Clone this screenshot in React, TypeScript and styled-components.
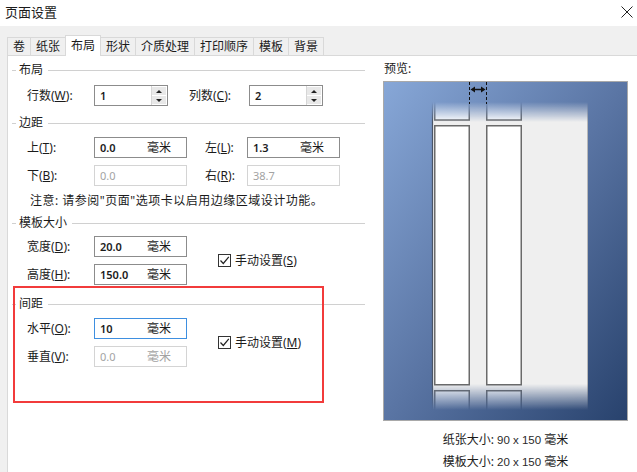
import React from 'react';
import styled, { createGlobalStyle } from 'styled-components';

const GlobalStyle = createGlobalStyle`
  html, body { margin: 0; padding: 0; background: #ffffff; }
  body {
    width: 637px; height: 472px; overflow: hidden;
    font-family: "Noto Sans", "Noto Sans CJK SC", sans-serif;
    font-size: 12px; line-height: 16px; color: #1b1b1b;
  }
  * { box-sizing: border-box; }
`;

const Window = styled.div`
  position: relative;
  width: 637px;
  height: 472px;
  background: #f0f0f0;
  display: flex;
  flex-direction: column;
  overflow: hidden;
`;

const TitleBar = styled.div`
  height: 26px;
  flex: none;
  background: #ffffff;
  display: flex;
  align-items: center;
  justify-content: space-between;
  padding: 0 4px 2px 5px;
  font-size: 13px;
`;

const CloseIcon = styled.svg`
  display: block;
`;

const TabBand = styled.div`
  height: 29px;
  flex: none;
  display: flex;
  align-items: flex-end;
  padding-left: 8px;
`;

const Tab = styled.div<{ $active?: boolean }>`
  position: relative;
  z-index: ${p => (p.$active ? 2 : 1)};
  height: ${p => (p.$active ? 21 : 18)}px;
  margin-bottom: ${p => (p.$active ? -1 : 0)}px;
  margin-left: -1px;
  padding: ${p => (p.$active ? '2px 5px 0' : '1px 5px 0')};
  border: 1px solid #d9d9d9;
  border-bottom: none;
  background: ${p => (p.$active ? '#ffffff' : '#f0f0f0')};
  font-size: 12px;
  line-height: 16px;
  white-space: nowrap;
`;

const Panel = styled.div`
  flex: 1;
  margin-left: 7px;
  background: #ffffff;
  border-top: 1px solid #d9d9d9;
  border-left: 1px solid #d9d9d9;
  display: grid;
  grid-template-columns: 361px 1fr;
  align-items: start;
`;

const LeftCol = styled.div`
  padding: 0 4px;
  display: flex;
  flex-direction: column;
`;

const Section = styled.section<{ $top: number }>`
  margin-top: ${p => p.$top}px;
  display: flex;
  flex-direction: column;
`;

const Header = styled.div`
  display: flex;
  align-items: center;
  height: 16px;
  &::before { content: ''; width: 4px; height: 1px; background: #d0d0d0; }
  &::after { content: ''; flex: 1; height: 1px; background: #d0d0d0; }
`;

const HeaderText = styled.span`
  padding: 0 5px 0 3px;
`;

const Body = styled.div<{ $top: number; $row?: boolean }>`
  padding-top: ${p => p.$top}px;
  display: flex;
  flex-direction: ${p => (p.$row ? 'row' : 'column')};
  align-items: ${p => (p.$row ? 'center' : 'stretch')};
  gap: ${p => (p.$row ? 0 : 7)}px;
`;

const Stack = styled.div`
  display: flex;
  flex-direction: column;
  gap: 7px;
`;

const Row = styled.div`
  display: flex;
  align-items: center;
  height: 21px;
  padding-left: 15px;
`;

const Label = styled.span<{ $w: number; $gap?: number }>`
  width: ${p => p.$w}px;
  margin-left: ${p => p.$gap ?? 0}px;
  flex: none;
  white-space: nowrap;
`;

const U = styled.u`
  text-decoration: underline;
  text-underline-offset: 1px;
`;

type FieldState = 'normal' | 'disabled' | 'focus';

const borderFor = (s?: FieldState) =>
  s === 'disabled' ? '#d4d4d4' : s === 'focus' ? '#3e8fe0' : '#8c8c8c';

const Field = styled.div<{ $state?: FieldState; $w?: number }>`
  width: ${p => p.$w ?? 93}px;
  height: 21px;
  flex: none;
  border: 1px solid ${p => borderFor(p.$state)};
  background: #ffffff;
  display: flex;
  align-items: center;
  padding-left: 5px;
  color: ${p => (p.$state === 'disabled' ? '#a3a3a3' : '#1b1b1b')};
`;

const Value = styled.span<{ $dim?: boolean }>`
  width: 47px;
  flex: none;
  font-family: "Noto Sans", "Liberation Sans", sans-serif;
  font-weight: ${p => (p.$dim ? 400 : 600)};
  font-size: 11px;
`;

const Unit = styled.span``;

const SpinField = styled.div`
  width: 74px;
  height: 21px;
  flex: none;
  border: 1px solid #8c8c8c;
  background: #ffffff;
  display: flex;
  align-items: center;
  padding-left: 5px;
`;

const SpinValue = styled.span`
  flex: 1;
  font-weight: 600;
  font-size: 11px;
`;

const Spinner = styled.div`
  width: 16px;
  height: 19px;
  display: flex;
  flex-direction: column;
  gap: 1px;
  padding: 1px 1px 1px 0;
  border-left: 1px solid #d6d6d6;
`;

const SpinBtn = styled.div<{ $down?: boolean }>`
  flex: 1;
  background: #e8e8e8;
  display: flex;
  align-items: center;
  justify-content: center;
  &::after {
    content: '';
    width: 0;
    height: 0;
    border-left: 3px solid transparent;
    border-right: 3px solid transparent;
    ${p => (p.$down ? 'border-top: 3px solid #222;' : 'border-bottom: 3px solid #222;')}
  }
`;

const Note = styled.div`
  height: 16px;
  padding-left: 18px;
  white-space: nowrap;
  letter-spacing: 0.5px;
`;

const Check = styled.label`
  display: flex;
  align-items: center;
  gap: 4px;
  margin-left: 31px;
  white-space: nowrap;
`;

const Box = styled.span`
  width: 13px;
  height: 13px;
  border: 1px solid #333333;
  background: #ffffff;
  display: flex;
  align-items: center;
  justify-content: center;
`;

const RightCol = styled.div`
  padding: 5px 0 0 14px;
  display: flex;
  flex-direction: column;
  align-items: flex-start;
`;

const PreviewLabel = styled.div`
  height: 16px;
  margin: 0 0 4px 1px;
`;

const PreviewFrame = styled.div`
  width: 245px;
  height: 340px;
  border: 1px solid #a9a9a9;
  background: #5d78a6;
`;

const Info = styled.div`
  width: 245px;
  margin-top: 8px;
  display: flex;
  flex-direction: column;
  align-items: center;
`;

const InfoLine = styled.div`
  height: 22px;
  line-height: 22px;
  white-space: nowrap;
`;

const InfoNum = styled.span`
  font-family: "Liberation Sans Narrow", "Liberation Sans", sans-serif;
  font-size: 11.5px;
  color: #2a2a2a;
`;

const RedMark = styled.div`
  position: absolute;
  left: 13px;
  top: 286px;
  width: 311px;
  height: 117px;
  border: 2px solid #f23b3b;
  pointer-events: none;
`;

const CheckMark = () => (
  <svg width="11" height="11" viewBox="0 0 11 11">
    <path d="M1.5 5.5 L4.3 8.5 L9.8 1.8" fill="none" stroke="#222" strokeWidth="1.2" />
  </svg>
);

const Preview = () => (
  <svg width="243" height="338" viewBox="0 0 243 338" style={{ display: 'block' }}>
    <defs>
      <linearGradient id="bg" x1="0" y1="0" x2="1" y2="1">
        <stop offset="0" stopColor="#87a7d7" />
        <stop offset="0.5" stopColor="#5a75a4" />
        <stop offset="1" stopColor="#28426d" />
      </linearGradient>
      <linearGradient id="fade" gradientUnits="userSpaceOnUse" x1="0" y1="0" x2="0" y2="338">
        <stop offset={20 / 338} stopColor="#fff" stopOpacity="0" />
        <stop offset={40 / 338} stopColor="#fff" stopOpacity="1" />
        <stop offset={302 / 338} stopColor="#fff" stopOpacity="1" />
        <stop offset={328 / 338} stopColor="#fff" stopOpacity="0" />
      </linearGradient>
      <mask id="m">
        <rect x="0" y="0" width="243" height="338" fill="url(#fade)" />
      </mask>
    </defs>
    <rect x="0" y="0" width="243" height="338" fill="url(#bg)" />
    <g mask="url(#m)">
      <rect x="48" y="18" width="156" height="320" fill="#efefef" />
      <line x1="48.5" y1="18" x2="48.5" y2="338" stroke="#4a5568" strokeWidth="1.2" />
      <line x1="203.5" y1="18" x2="203.5" y2="338" stroke="#b8b8b8" strokeWidth="1" />
      {[50, 102].map(x => (
        <g key={x}>
          <rect x={x + 0.75} y={-10} width={34.5} height={48} fill="#ffffff" stroke="#6a6a6a" strokeWidth="1.5" />
          <rect x={x + 0.75} y={43.75} width={34.5} height={259} fill="#ffffff" stroke="#6a6a6a" strokeWidth="1.5" />
          <rect x={x + 0.75} y={308.75} width={34.5} height={60} fill="#ffffff" stroke="#6a6a6a" strokeWidth="1.5" />
        </g>
      ))}
    </g>
    <line x1="85.5" y1="0" x2="85.5" y2="22" stroke="#111" strokeWidth="1" strokeDasharray="3 2" />
    <line x1="102.5" y1="0" x2="102.5" y2="22" stroke="#111" strokeWidth="1" strokeDasharray="3 2" />
    <line x1="89" y1="7.5" x2="99" y2="7.5" stroke="#111" strokeWidth="1.5" />
    <path d="M86.5 7.5 L91 4.5 L91 10.5 Z" fill="#111" />
    <path d="M101.5 7.5 L97 4.5 L97 10.5 Z" fill="#111" />
  </svg>
);

const tabs = ['卷', '纸张', '布局', '形状', '介质处理', '打印顺序', '模板', '背景'];

export default function App() {
  return (
    <>
      <GlobalStyle />
      <Window>
        <TitleBar>
          <span>页面设置</span>
          <CloseIcon width="12" height="12" viewBox="0 0 12 12">
            <path d="M0.5 0.5 L11.5 11.5 M11.5 0.5 L0.5 11.5" stroke="#222" strokeWidth="1" />
          </CloseIcon>
        </TitleBar>
        <TabBand>
          {tabs.map(t => (
            <Tab key={t} $active={t === '布局'}>{t}</Tab>
          ))}
        </TabBand>
        <Panel>
          <LeftCol>
            <Section $top={6}>
              <Header><HeaderText>布局</HeaderText></Header>
              <Body $top={7}>
                <Row>
                  <Label $w={67}>行数(<U>W</U>):</Label>
                  <SpinField>
                    <SpinValue>1</SpinValue>
                    <Spinner><SpinBtn /><SpinBtn $down /></Spinner>
                  </SpinField>
                  <Label $w={60} $gap={21}>列数(<U>C</U>):</Label>
                  <SpinField>
                    <SpinValue>2</SpinValue>
                    <Spinner><SpinBtn /><SpinBtn $down /></Spinner>
                  </SpinField>
                </Row>
              </Body>
            </Section>

            <Section $top={9}>
              <Header><HeaderText>边距</HeaderText></Header>
              <Body $top={6}>
                <Row>
                  <Label $w={67}>上(<U>T</U>):</Label>
                  <Field><Value>0.0</Value><Unit>毫米</Unit></Field>
                  <Label $w={42} $gap={18}>左(<U>L</U>):</Label>
                  <Field><Value>1.3</Value><Unit>毫米</Unit></Field>
                </Row>
                <Row>
                  <Label $w={67}>下(<U>B</U>):</Label>
                  <Field $state="disabled"><Value $dim>0.0</Value></Field>
                  <Label $w={42} $gap={18}>右(<U>R</U>):</Label>
                  <Field $state="disabled"><Value $dim>38.7</Value></Field>
                </Row>
                <Note>注意: 请参阅"页面"选项卡以启用边缘区域设计功能。</Note>
              </Body>
            </Section>

            <Section $top={6}>
              <Header><HeaderText>模板大小</HeaderText></Header>
              <Body $top={5} $row>
                <Stack>
                  <Row>
                    <Label $w={67}>宽度(<U>D</U>):</Label>
                    <Field><Value>20.0</Value><Unit>毫米</Unit></Field>
                  </Row>
                  <Row>
                    <Label $w={67}>高度(<U>H</U>):</Label>
                    <Field><Value>150.0</Value><Unit>毫米</Unit></Field>
                  </Row>
                </Stack>
                <Check><Box><CheckMark /></Box><span>手动设置(<U>S</U>)</span></Check>
              </Body>
            </Section>

            <Section $top={11}>
              <Header><HeaderText>间距</HeaderText></Header>
              <Body $top={6} $row>
                <Stack>
                  <Row>
                    <Label $w={67}>水平(<U>O</U>):</Label>
                    <Field $state="focus"><Value>10</Value><Unit>毫米</Unit></Field>
                  </Row>
                  <Row>
                    <Label $w={67}>垂直(<U>V</U>):</Label>
                    <Field $state="disabled"><Value $dim>0.0</Value><Unit>毫米</Unit></Field>
                  </Row>
                </Stack>
                <Check><Box><CheckMark /></Box><span>手动设置(<U>M</U>)</span></Check>
              </Body>
            </Section>
          </LeftCol>

          <RightCol>
            <PreviewLabel>预览:</PreviewLabel>
            <PreviewFrame><Preview /></PreviewFrame>
            <Info>
              <InfoLine>纸张大小: <InfoNum>90 x 150</InfoNum> 毫米</InfoLine>
              <InfoLine>模板大小: <InfoNum>20 x 150</InfoNum> 毫米</InfoLine>
            </Info>
          </RightCol>
        </Panel>
        <RedMark />
      </Window>
    </>
  );
}
